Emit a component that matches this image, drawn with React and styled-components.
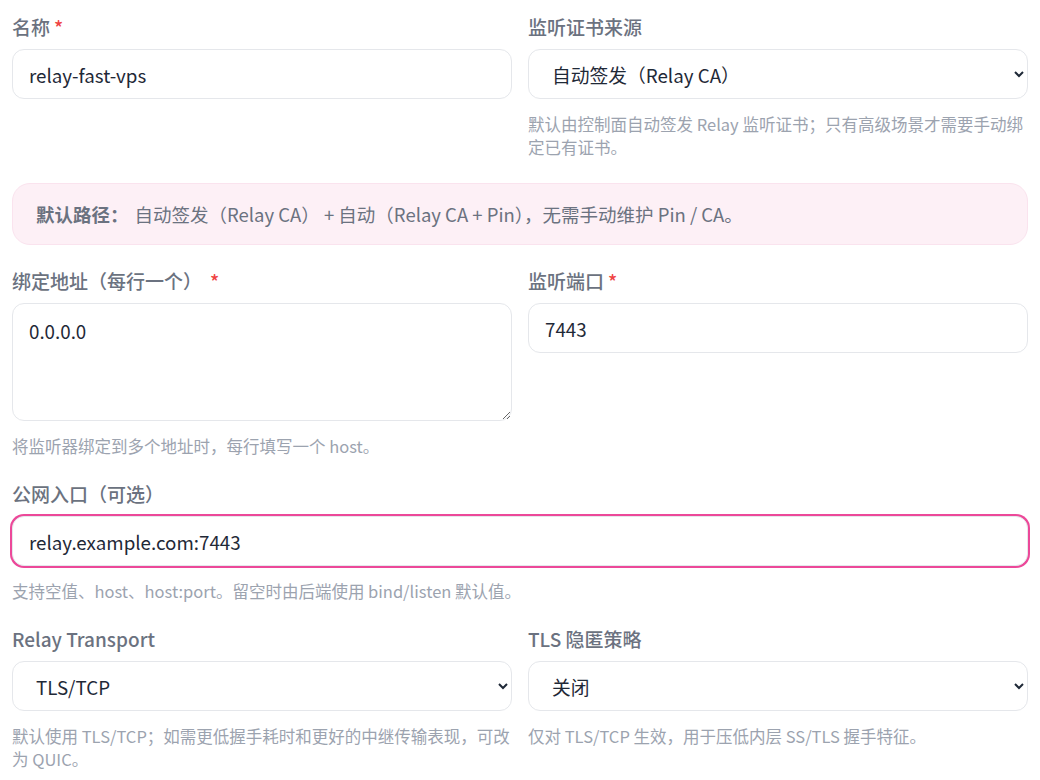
import styled, { createGlobalStyle } from "styled-components"

const GlobalStyle = createGlobalStyle`
    body {
        margin: 0;
        background: #ffffff;
        font-family: "Noto Sans CJK SC", "Noto Sans", sans-serif;
    }
`

const Form = styled.div`
    width: 1016px;
    padding: 15px 12px;
    display: flex;
    flex-direction: column;
    gap: 24px;
`

const Row = styled.div`
    display: grid;
    grid-template-columns: ${(p) => (p.$single ? "1fr" : "500px 500px")};
    column-gap: 16px;
    align-items: start;
`

const Field = styled.div`
    display: flex;
    flex-direction: column;
`

const Label = styled.label`
    font-size: 19px;
    line-height: 24px;
    font-weight: 500;
    color: #6b7280;
    margin-bottom: 10px;
`

const Required = styled.span`
    color: #ef4444;
    margin-left: ${(p) => p.$gap || 4}px;
`

const controlBase = `
    box-sizing: border-box;
    width: 100%;
    border: 1px solid #e5e7eb;
    border-radius: 12px;
    background: #ffffff;
    color: #1f2937;
    font-family: "Noto Sans CJK SC", "Noto Sans", sans-serif;
    font-size: 18.75px;
    outline: none;
    margin: 0;
`

const Input = styled.input`
    ${controlBase}
    height: 50px;
    padding: 0 16px;
    box-shadow: ${(p) => (p.$focused ? "0 0 0 2px #ec4899" : "none")};
`

const Select = styled.select`
    ${controlBase}
    height: 50px;
    padding: 0 10px 0 19px;
    color: #1f2937;
`

const TextArea = styled.textarea`
    ${controlBase}
    display: block;
    height: 118px;
    padding: 13px 16px;
    line-height: 28px;
    resize: vertical;
`

const Help = styled.p`
    margin: 14px 0 0;
    font-size: 16.5px;
    line-height: 23px;
    color: #9ca3af;
`

const Notice = styled.div`
    box-sizing: border-box;
    height: 62px;
    display: flex;
    align-items: center;
    padding: 0 23px;
    border: 1px solid #fae3ee;
    border-radius: 18px;
    background: #fdf0f6;
    color: #6b7280;
    font-size: 18.5px;
`

const NoticeTitle = styled.strong`
    font-weight: 700;
    margin-right: 6px;
`

const App = () => {
    return (
        <>
            <GlobalStyle />
            <Form>
                <Row>
                    <Field>
                        <Label>名称<Required>*</Required></Label>
                        <Input defaultValue="relay-fast-vps" />
                    </Field>
                    <Field>
                        <Label>监听证书来源</Label>
                        <Select defaultValue="auto">
                            <option value="auto">自动签发（Relay CA）</option>
                            <option value="manual">手动绑定已有证书</option>
                        </Select>
                        <Help>默认由控制面自动签发 Relay 监听证书；只有高级场景才需要手动绑定已有证书。</Help>
                    </Field>
                </Row>
                <Notice>
                    <NoticeTitle>默认路径：</NoticeTitle>
                    自动签发（Relay CA） + 自动（Relay CA + Pin），无需手动维护 Pin / CA。
                </Notice>
                <Row>
                    <Field>
                        <Label>绑定地址（每行一个）<Required $gap={8}>*</Required></Label>
                        <TextArea defaultValue="0.0.0.0" />
                        <Help>将监听器绑定到多个地址时，每行填写一个 host。</Help>
                    </Field>
                    <Field>
                        <Label>监听端口<Required>*</Required></Label>
                        <Input defaultValue="7443" />
                    </Field>
                </Row>
                <Row $single>
                    <Field>
                        <Label>公网入口（可选）</Label>
                        <Input $focused defaultValue="relay.example.com:7443" />
                        <Help>支持空值、host、host:port。留空时由后端使用 bind/listen 默认值。</Help>
                    </Field>
                </Row>
                <Row>
                    <Field>
                        <Label>Relay Transport</Label>
                        <Select defaultValue="tcp">
                            <option value="tcp">TLS/TCP</option>
                            <option value="quic">QUIC</option>
                        </Select>
                        <Help>默认使用 TLS/TCP；如需更低握手耗时和更好的中继传输表现，可改为 QUIC。</Help>
                    </Field>
                    <Field>
                        <Label>TLS 隐匿策略</Label>
                        <Select defaultValue="off">
                            <option value="off">关闭</option>
                            <option value="on">开启</option>
                        </Select>
                        <Help>仅对 TLS/TCP 生效，用于压低内层 SS/TLS 握手特征。</Help>
                    </Field>
                </Row>
            </Form>
        </>
    )
}

export default App
